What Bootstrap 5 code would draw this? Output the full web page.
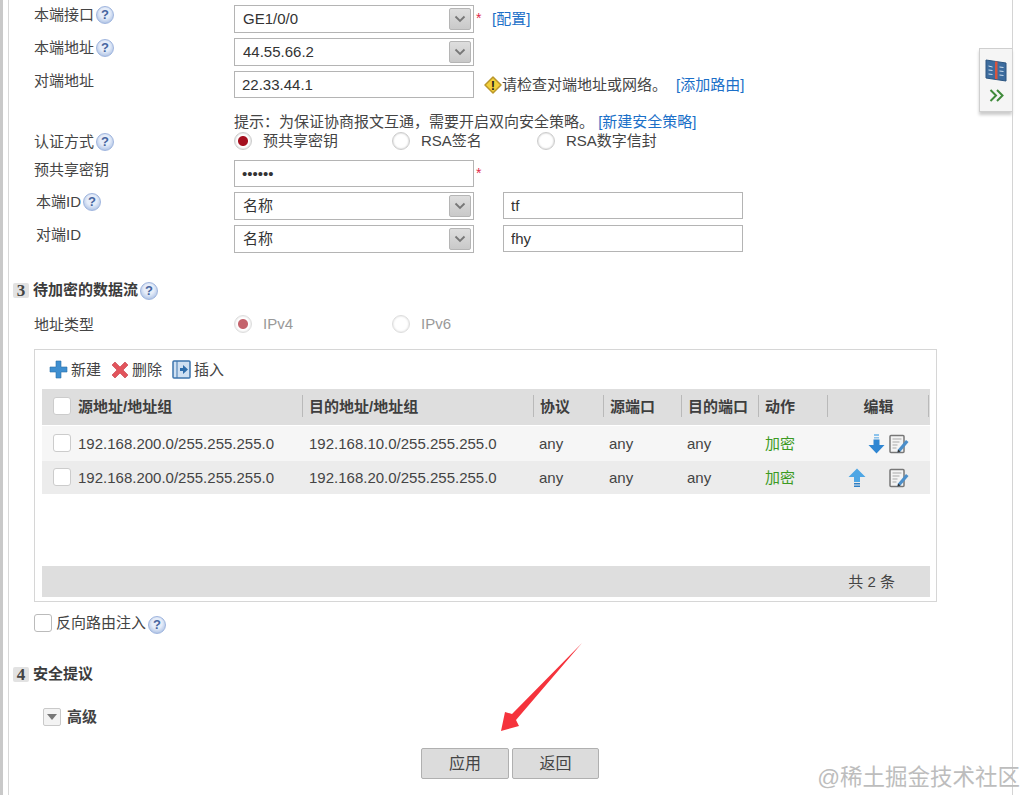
<!DOCTYPE html>
<html lang="zh-CN">
<head>
<meta charset="utf-8">
<title>IPSec</title>
<link href="https://cdn.jsdelivr.net/npm/bootstrap@5.3.0/dist/css/bootstrap.min.css" rel="stylesheet">
<style>
html,body{height:795px;overflow:hidden;background:#fff}
body{font:15px/20px "Liberation Sans","Noto Sans CJK SC",sans-serif;color:#444;position:relative}
.edge-strip{width:9px;border-left:3px solid #c9c9c9;border-right:1px solid #d8d8d8;flex:none}
.page-body{width:1004px;height:795px;border-right:1px solid #d4d4d4;flex:none;padding-top:5px}
.form-line{padding-left:25px;display:flex;align-items:flex-start}
.line-gap{margin-bottom:5px}
.field-name{width:200px;flex:none;display:flex}
.field-name.inset{padding-left:2px}
.help-dot{width:18px;height:18px;border-radius:50%;flex:none;margin:1px 0 0 2px;background:radial-gradient(circle at 50% 40%,#e6edf9 0 40%,#b9cbe9 72%,#86a2d6 100%);border:1px solid #9fb5de;color:#46659f;font:bold 13px/16px "Liberation Sans",sans-serif;text-align:center;display:inline-block}
.select-wrap{position:relative;width:240px;flex:none}
.select-wrap .form-select{height:28px;padding:0 26px 0 8px;font-size:15px;line-height:26px;border:1px solid #b4b4b4;border-radius:0;color:#333;background-image:none}
.select-arrow{position:absolute;right:3px;top:3px;width:22px;height:22px;border:1px solid #b5b5b5;border-radius:2px;background:linear-gradient(#dedede,#c9c9c9);display:flex;align-items:center;justify-content:center;pointer-events:none}
.plain-input{width:240px;height:27px;padding:0 7px;font-size:15px;border:1px solid #b4b4b4;border-radius:0;color:#333;flex:none}
.id-input{margin-left:29px}
.req-mark{color:#e0284a;font-size:14px;margin:4px 0 0 2px;width:8px;line-height:18px}
.cfg-link{color:#1b6fc8;text-decoration:none}
.warn-mark{margin:4px 0 0 10px;flex:none}
.route-add{margin-left:9px}
.notice-line{padding-left:225px;height:18px;line-height:18px;margin-top:15px;margin-bottom:1px}
.radio-line{height:18px;display:flex;align-items:center}
.radio-item{display:flex;align-items:center}
.radio-item .form-check-input{width:18px;height:18px;margin:0 11px 0 0;border:1px solid #ccc;background-image:none;background-color:#fff;box-shadow:inset 0 0 2px #bbb;flex:none;opacity:1}
.radio-item .form-check-input:checked{background-image:radial-gradient(circle,#a5101f 0 4.5px,#fff 5.5px);background-color:#fff;border-color:#ccc}
.radio-item .form-check-input:disabled{opacity:.65}
.radio-item.muted{color:#999}
.w-first{width:158px}.w-second{width:145px}
.sec-head{display:flex;align-items:center;height:20px;font-weight:700;padding-left:4px;color:#3c3c3c}
.sec-num{width:16px;height:15px;margin-right:4px;background:#e2e2e2;border-radius:2px;font:bold 17px/15px "Liberation Serif",serif;text-align:center;color:#444;flex:none}
.data-box{margin:14px 0 0 25px;width:903px;height:253px;border:1px solid #d6d6d6;padding:0 6px 0 7px}
.tool-row{height:39px;display:flex;align-items:center;padding-left:7px}
.tool-item{display:flex;align-items:center;gap:3px;margin-right:10px}
.table-area{height:177px}
.table.data-grid{table-layout:fixed;width:888px;margin:0;font-size:15px;color:#444;--bs-table-bg:transparent;border-collapse:separate;border-spacing:0}
.data-grid th{height:37px;padding:0 0 0 7px;background:#dedede;font-weight:700;color:#3e3e3e;border:0;border-bottom:1px solid #fff;vertical-align:middle;position:relative;white-space:nowrap}
.data-grid th.sep::before{content:"";position:absolute;left:0;top:6px;height:22px;width:1px;background:#b9b9b9}
.data-grid th.sep-end{padding-left:0}
.data-grid th.sep-end::after{content:"";position:absolute;right:1px;top:6px;height:22px;width:1px;background:#b9b9b9}
.data-grid td{padding:0 0 0 7px;border:0;vertical-align:middle;white-space:nowrap;background:#f6f6f6;height:35px}
.data-grid td.any-cell{padding-left:6px}
.data-grid tr.alt td{background:#ececec;height:33px}
.data-grid th.first,.data-grid td.first{padding-left:11px}
.data-grid .form-check-input{width:18px;height:18px;margin:0 7px 0 0;border:1px solid #ccc;border-radius:3px;vertical-align:-3px;float:none}
.act-enc{color:#3c9a22}
.op-cell{display:flex;justify-content:flex-end;align-items:center;padding-right:21px}
.grid-foot{height:31px;background:#dedede;display:flex;align-items:center;justify-content:flex-end;padding-right:35px}
.route-line{margin:12px 0 0 25px;display:flex;align-items:center;height:18px}
.route-line .form-check-input{width:18px;height:18px;margin:0 4px 0 0;border:1px solid #bbb;border-radius:3px}
.adv-line{display:flex;align-items:center;margin:23px 0 0 34px;height:20px;font-weight:700}
.adv-toggle{width:18px;height:18px;border:1px solid #c9c9c9;border-radius:2px;background:#f3f3f3;margin-right:6px;display:flex;align-items:center;justify-content:center}
.action-row{display:flex;gap:3px;margin:21px 0 0 412px}
.action-btn{width:88px;height:31px;padding:0;font-size:16px;line-height:29px;background:#dcdcdc;border:1px solid #b0b0b0;border-radius:2px;color:#444}
.action-btn + .action-btn{width:87px}
.side-tab{position:absolute;left:979px;top:48px;width:33px;height:64px;background:#f5f5f5;border:1px solid #cfcfcf;border-right:0;box-shadow:0 3px 3px #ccc;display:flex;flex-direction:column;align-items:center;padding-top:9px;gap:6px}
.red-arrow{position:absolute;left:495px;top:638px}
.mark-text{position:absolute;right:6px;top:765px;font-size:22.500px;line-height:26px;color:#bdbdbd;white-space:nowrap}
</style>
</head>
<body class="d-flex">
<svg width="0" height="0" class="position-absolute">
<symbol id="chev" viewBox="0 0 12 8"><path d="M1.500 1.500 6 6l4.500-4.500" fill="none" stroke="#777" stroke-width="1.800"/></symbol>
<symbol id="edit" viewBox="0 0 20 20"><rect x="1" y="1.500" width="14" height="17" rx="1" fill="#f4f4f4" stroke="#777" stroke-width="1.500"/><path d="M3.500 5h9M3.500 8h7M3.500 11h5M3.500 14h4" stroke="#a9a9a9"/><path d="M9 15.500 17 6l2.500 2-8 9.500-3 1z" fill="#4c8fca"/><path d="m8.500 18.500.5-3 2.500 2z" fill="#333"/></symbol>
</svg>
<div class="edge-strip"></div>
<main class="page-body">
  <div class="form-line line-gap">
    <div class="field-name">本端接口<span class="help-dot">?</span></div>
    <div class="select-wrap"><select class="form-select"><option>GE1/0/0</option></select><span class="select-arrow"><svg width="12" height="8"><use href="#chev"/></svg></span></div>
    <span class="req-mark">*</span><a class="cfg-link ms-2 mt-1" href="#">[配置]</a>
  </div>
  <div class="form-line line-gap">
    <div class="field-name">本端地址<span class="help-dot">?</span></div>
    <div class="select-wrap"><select class="form-select"><option>44.55.66.2</option></select><span class="select-arrow"><svg width="12" height="8"><use href="#chev"/></svg></span></div>
  </div>
  <div class="form-line">
    <div class="field-name">对端地址</div>
    <input class="form-control plain-input" value="22.33.44.1">
    <svg class="warn-mark" width="18" height="20" viewBox="0 0 18 20"><path d="M9 2 17 10 9 18 1 10z" fill="#f2cf3a" stroke="#b9962a" stroke-width="1.500" stroke-linejoin="round"/><text x="9" y="15" text-anchor="middle" font-family="Liberation Sans" font-weight="700" font-size="13" fill="#222">!</text></svg>
    <span class="mt-1">请检查对端地址或网络。</span><a class="cfg-link mt-1 route-add" href="#">[添加路由]</a>
  </div>
  <div class="notice-line">提示：为保证协商报文互通，需要开启双向安全策略。 <a class="cfg-link" href="#">[新建安全策略]</a></div>
  <div class="form-line" style="margin-bottom:8px">
    <div class="field-name">认证方式<span class="help-dot">?</span></div>
    <div class="radio-line">
      <label class="radio-item w-first"><input class="form-check-input" type="radio" name="auth" checked>预共享密钥</label>
      <label class="radio-item w-second"><input class="form-check-input" type="radio" name="auth">RSA签名</label>
      <label class="radio-item"><input class="form-check-input" type="radio" name="auth">RSA数字信封</label>
    </div>
  </div>
  <div class="form-line line-gap">
    <div class="field-name">预共享密钥</div>
    <input class="form-control plain-input" type="password" value="tfhy12">
    <span class="req-mark">*</span>
  </div>
  <div class="form-line line-gap">
    <div class="field-name inset">本端ID<span class="help-dot">?</span></div>
    <div class="select-wrap"><select class="form-select"><option>名称</option></select><span class="select-arrow"><svg width="12" height="8"><use href="#chev"/></svg></span></div>
    <input class="form-control plain-input id-input" value="tf">
  </div>
  <div class="form-line">
    <div class="field-name inset">对端ID</div>
    <div class="select-wrap"><select class="form-select"><option>名称</option></select><span class="select-arrow"><svg width="12" height="8"><use href="#chev"/></svg></span></div>
    <input class="form-control plain-input id-input" value="fhy">
  </div>

  <div class="sec-head" style="margin-top:27px"><span class="sec-num">3</span>待加密的数据流<span class="help-dot">?</span></div>
  <div class="form-line" style="margin-top:15px">
    <div class="field-name">地址类型</div>
    <div class="radio-line">
      <label class="radio-item w-first muted"><input class="form-check-input" type="radio" name="ipv" checked disabled>IPv4</label>
      <label class="radio-item muted"><input class="form-check-input" type="radio" name="ipv" disabled>IPv6</label>
    </div>
  </div>

  <section class="data-box">
    <div class="tool-row">
      <span class="tool-item"><svg width="19" height="19" viewBox="0 0 19 19"><path d="M7 1h5v6h6v5h-6v6H7v-6H1V7h6z" fill="#3f8fd0" stroke="#2a6fa8" stroke-width=".6"/></svg>新建</span>
      <span class="tool-item"><svg width="18" height="18" viewBox="0 0 18 18"><path d="M4 1l5 5 5-5 3 3-5 5 5 5-3 3-5-5-5 5-3-3 5-5-5-5z" fill="#e2545c" stroke="#c23b44" stroke-width=".6"/></svg>删除</span>
      <span class="tool-item"><svg width="19" height="19" viewBox="0 0 19 19"><rect x="1" y="1" width="17" height="17" rx="1" fill="#cfe0f2" stroke="#3d74ad" stroke-width="1.500"/><path d="M5 1v17" stroke="#3d74ad"/><path d="M8 8h3V5l5 4.500-5 4.500v-3H8z" fill="#2f6eac"/></svg>插入</span>
    </div>
    <div class="table-area">
      <table class="table data-grid">
        <colgroup><col style="width:260px"><col style="width:231px"><col style="width:70px"><col style="width:78px"><col style="width:77px"><col style="width:69px"><col style="width:103px"></colgroup>
        <thead><tr>
          <th class="first"><input class="form-check-input" type="checkbox">源地址/地址组</th>
          <th class="sep">目的地址/地址组</th><th class="sep">协议</th><th class="sep">源端口</th><th class="sep">目的端口</th><th class="sep">动作</th><th class="sep sep-end text-center">编辑</th>
        </tr></thead>
        <tbody>
          <tr><td class="first"><input class="form-check-input" type="checkbox">192.168.200.0/255.255.255.0</td><td>192.168.10.0/255.255.255.0</td><td class="any-cell">any</td><td class="any-cell">any</td><td class="any-cell">any</td><td class="act-enc">加密</td>
            <td><div class="op-cell"><svg width="17" height="20" viewBox="0 0 17 20"><path d="M6 0h5v2H6zM6 3h5v1.500H6z" fill="#8cc3ec"/><path d="M5.500 5.500h6V11h5L8.500 19.500.5 11h5z" fill="#2f86d2"/></svg><svg class="ms-1" width="20" height="20"><use href="#edit"/></svg></div></td></tr>
          <tr class="alt"><td class="first"><input class="form-check-input" type="checkbox">192.168.200.0/255.255.255.0</td><td>192.168.20.0/255.255.255.0</td><td class="any-cell">any</td><td class="any-cell">any</td><td class="any-cell">any</td><td class="act-enc">加密</td>
            <td><div class="op-cell"><svg class="up-arrow" width="18" height="20" viewBox="0 0 18 20"><path d="M9 .5 17.500 9H12v5H6V9H.5z" fill="#4ea6e4"/><path d="M6 15h6v1.500H6zM6 17.500h6V19H6z" fill="#2f7fc4"/></svg><svg style="margin-left:23px" width="20" height="20"><use href="#edit"/></svg></div></td></tr>
        </tbody>
      </table>
    </div>
    <div class="grid-foot">共 2 条</div>
  </section>

  <label class="route-line"><input class="form-check-input" type="checkbox">反向路由注入<span class="help-dot" style="margin-top:4px">?</span></label>
  <div class="sec-head" style="margin-top:32px"><span class="sec-num">4</span>安全提议</div>
  <div class="adv-line"><span class="adv-toggle"><svg width="10" height="6"><path d="M0 0h10L5 6z" fill="#777"/></svg></span>高级</div>
  <div class="action-row"><button class="btn action-btn">应用</button><button class="btn action-btn">返回</button></div>
</main>

<aside class="side-tab">
  <svg width="22" height="25" viewBox="0 0 22 25"><path d="M1 2 21 5v18L1 20z" fill="#3d6c9e" stroke="#2c5580"/><path d="M10 3.500h2.500v18L10 21z" fill="#d9553f"/><path d="M3.500 8l4 1M3.500 12l4 .5M3.500 16l4 .5M14.500 9l4 .5M14.500 13l4 .5M14.500 17l4 .5" stroke="#cfe0f0"/></svg>
  <svg width="15" height="13" viewBox="0 0 15 13"><path d="M1.500 1 7 6.500 1.500 12M8 1l5.500 5.500L8 12" fill="none" stroke="#3f8a3a" stroke-width="2"/></svg>
</aside>
<svg class="red-arrow" width="95" height="100" viewBox="495 638 95 100"><path d="M582 643 512 714 505 712 501 731 519 726 516 720z" fill="#f5333c"/></svg>
<div class="mark-text">@稀土掘金技术社区</div>
</body>
</html>
